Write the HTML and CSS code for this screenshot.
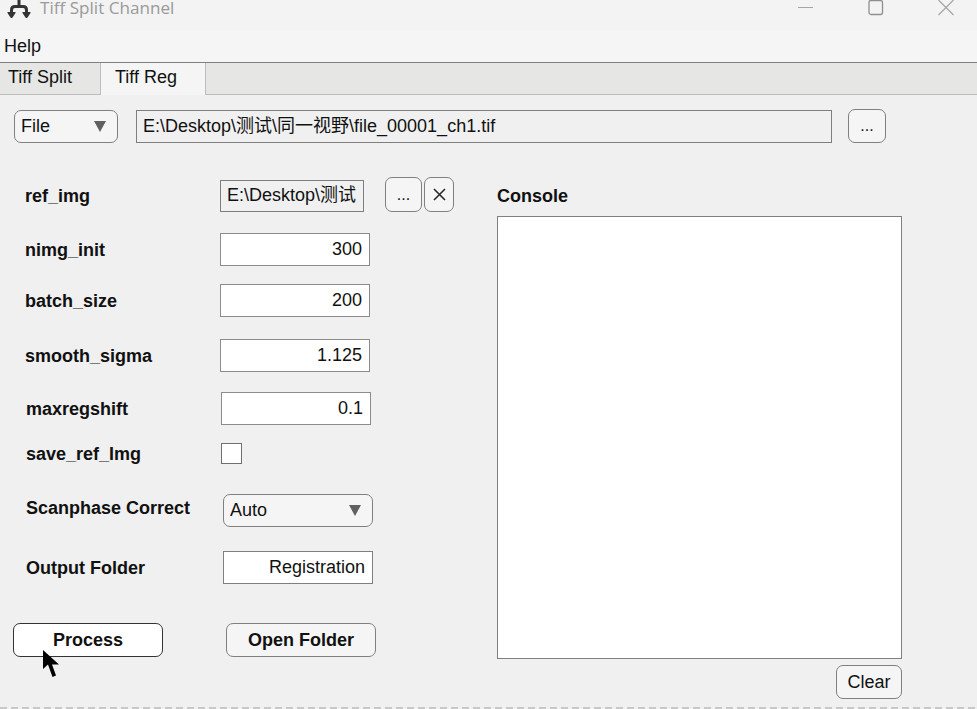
FILE: index.html
```html
<!DOCTYPE html>
<html lang="en">

<head>
   <meta charset="UTF-8">
   <meta name="viewport" content="width=device-width, initial-scale=1.0">
   <title>Tiff Split Channel</title>
   <link rel="stylesheet" href="styles.css">
</head>

<body>
   <header class="titlebar">
      <svg class="app-icon" width="26" height="20" viewBox="0 0 26 20">
         <path d="M13 0V6.500M5.500 14V10Q5.500 6.500 9 6.500H17Q20.500 6.500 20.500 10V14" fill="none" stroke="#333" stroke-width="3" />
         <path d="M2 12H9Q10 12 9.500 13L6.500 17.500Q5.500 18.500 4.500 17.500L1.500 13Q1 12 2 12ZM17 12H24Q25 12 24.500 13L21.500 17.500Q20.500 18.500 19.500 17.500L16.500 13Q16 12 17 12Z" fill="#333" />
      </svg>
      <span class="app-title">Tiff Split Channel</span>
      <div class="window-btns">
         <svg width="16" height="16" viewBox="0 0 16 16"><path d="M0 7.500H15" stroke="#a5a5a5" /></svg>
         <svg width="16" height="16" viewBox="0 0 16 16"><rect x="1" y="0.500" width="13.500" height="14" rx="2" fill="none" stroke="#8f8f8f" stroke-width="1.300" /></svg>
         <svg width="16" height="16" viewBox="0 0 16 16"><path d="M0.500 0L15.500 15M15.500 0L0.500 15" stroke="#a5a5a5" stroke-width="1.200" /></svg>
      </div>
   </header>

   <nav class="menubar">Help</nav>

   <div class="tabs">
      <div class="tab">Tiff Split</div>
      <div class="tab active">Tiff Reg</div>
   </div>

   <main class="panel">
      <div class="file-row">
         <div class="select file-select">File<span class="arrow"></span></div>
         <div class="field readonly file-path">E:\Desktop\测试\同一视野\file_00001_ch1.tif</div>
         <button class="btn browse-main" type="button">...</button>
      </div>

      <div class="columns">
         <section class="params">
            <div class="row row-ref">
               <label>ref_img</label>
               <div class="field readonly ref-path">E:\Desktop\测试</div>
               <button class="btn browse-ref" type="button">...</button>
               <button class="btn clear-ref" type="button">
                  <svg width="13" height="13" viewBox="0 0 13 13"><path d="M1 1L12 12M12 1L1 12" stroke="#222" stroke-width="1.500" /></svg>
               </button>
            </div>
            <div class="row row-nimg">
               <label>nimg_init</label>
               <div class="field num">300</div>
            </div>
            <div class="row row-batch">
               <label>batch_size</label>
               <div class="field num">200</div>
            </div>
            <div class="row row-smooth">
               <label>smooth_sigma</label>
               <div class="field num">1.125</div>
            </div>
            <div class="row row-shift">
               <label>maxregshift</label>
               <div class="field num">0.1</div>
            </div>
            <div class="row row-save">
               <label>save_ref_Img</label>
               <div class="checkbox"></div>
            </div>
            <div class="row row-scan">
               <label>Scanphase Correct</label>
               <div class="select scan-select">Auto<span class="arrow"></span></div>
            </div>
            <div class="row row-output">
               <label>Output Folder</label>
               <div class="field num">Registration</div>
            </div>
            <div class="actions">
               <button class="btn action primary" type="button">Process</button>
               <button class="btn action" type="button">Open Folder</button>
            </div>
         </section>

         <section class="console">
            <h2>Console</h2>
            <div class="console-box"></div>
            <button class="btn clear-console" type="button">Clear</button>
         </section>
      </div>
   </main>

   <svg class="cursor" width="18" height="30" viewBox="0 0 18 30">
      <path d="M1 1V20L6 15.500L10.500 28L14 26.500L10 15.500H17Z" fill="#000" />
   </svg>
</body>

</html>
```

FILE: styles.css
```css
html,
body {
   margin: 0;
   padding: 0;
   height: 709px;
   overflow: hidden;
}

body {
   position: relative;
   background-color: #f0f0f0;
   color: #111;
   font-family: 'Liberation Sans', 'Noto Sans CJK SC', sans-serif;
   font-size: 18px;
}

.titlebar {
   display: flex;
   align-items: flex-start;
   height: 30px;
   background-color: #f3f3f3;
   overflow: hidden;
}

.app-icon {
   margin: 0 0 0 6px;
}

.app-title {
   margin: -4px 0 0 8px;
   color: #9a9a9a;
   font-family: 'Open Sans', sans-serif;
   font-size: 17.100px;
   line-height: 24px;
}

.window-btns {
   display: flex;
   margin-left: auto;
   margin-right: 23px;
   gap: 54px;
}

.menubar {
   height: 32px;
   line-height: 32px;
   padding-left: 4px;
   background-color: #f5f5f5;
   border-bottom: 1px solid #808080;
}

.tabs {
   display: flex;
   height: 31px;
   background-color: #e6e6e4;
   border-bottom: 1px solid #bdbdbd;
}

.tab {
   box-sizing: border-box;
   width: 101px;
   padding-left: 8px;
   line-height: 28px;
   border-right: 1px solid #bdbdbd;
}

.tab.active {
   width: 105px;
   height: 32px;
   padding-left: 14px;
   background-color: #f5f5f5;
}

.panel {
   padding-top: 15px;
}

.file-row {
   display: flex;
   align-items: flex-end;
   height: 33px;
   padding-left: 14px;
}

.field {
   box-sizing: border-box;
   width: 150px;
   height: 33px;
   padding: 0 7px 0 6px;
   line-height: 30px;
   background-color: #fff;
   border: 1px solid #8c8c8c;
   white-space: nowrap;
   overflow: hidden;
}

.field.readonly {
   background-color: #f0f0f0;
   border-color: #7f7f7f;
}

.field.num {
   text-align: right;
}

.select {
   box-sizing: border-box;
   display: flex;
   align-items: center;
   justify-content: space-between;
   width: 150px;
   height: 33px;
   padding: 0 11px 0 6px;
   background-color: #f5f5f5;
   border: 1px solid #808080;
   border-radius: 7px;
}

.arrow {
   width: 0;
   height: 0;
   border-left: 6.500px solid transparent;
   border-right: 6.500px solid transparent;
   border-top: 11px solid #606060;
}

.file-select {
   width: 104px;
}

.file-path {
   width: 696px;
   margin-left: 18px;
}

.btn {
   box-sizing: border-box;
   height: 34px;
   padding: 0;
   background-color: #f5f5f5;
   border: 1px solid #808080;
   border-radius: 7px;
   color: #111;
   font: inherit;
}

.browse-main {
   width: 38px;
   margin-left: 16px;
   font-size: 16px;
}

.columns {
   display: flex;
   align-items: flex-start;
}

.params {
   width: 483px;
   flex: none;
}

.row {
   display: flex;
   align-items: center;
   padding-left: 25px;
}

.row label {
   width: 195px;
   flex: none;
   font-weight: bold;
   line-height: 20px;
   margin-top: 1px;
}

.row-ref {
   margin-top: 34px;
   height: 35px;
   align-items: flex-end;
}

.row-ref label {
   align-self: center;
   margin-top: 3px;
}

.ref-path {
   width: 144px;
   height: 32px;
   line-height: 29px;
}

.browse-ref {
   width: 37px;
   height: 35px;
   margin-left: 21px;
   font-size: 16px;
}

.clear-ref {
   display: flex;
   align-items: center;
   justify-content: center;
   width: 30px;
   height: 35px;
   margin-left: 2px;
}

.row-nimg {
   margin-top: 21px;
}

.row-batch {
   margin-top: 18px;
}

.row-smooth {
   margin-top: 22px;
}

.row-shift {
   margin-top: 20px;
   padding-left: 26px;
}

.row-save {
   margin-top: 18px;
   padding-left: 26px;
}

.checkbox {
   box-sizing: border-box;
   width: 21px;
   height: 21px;
   background-color: #fff;
   border: 1px solid #707070;
}

.row-scan {
   margin-top: 30px;
   padding-left: 26px;
}

.row-scan label,
.row-output label {
   width: 197px;
}

.row-scan label {
   margin-top: -5px;
}

.row-output {
   margin-top: 24px;
   padding-left: 26px;
}

.row-output .field {
   border-color: #808080;
}

.actions {
   display: flex;
   gap: 63px;
   margin-top: 39px;
   padding-left: 13px;
}

.action {
   width: 150px;
   font-weight: bold;
}

.action.primary {
   background-color: #fff;
   border-color: #333;
}

.console {
   display: flex;
   flex-direction: column;
   align-items: flex-end;
   width: 405px;
   margin-left: 14px;
}

.console h2 {
   align-self: flex-start;
   height: 20px;
   margin: 43px 0 10px;
   font-size: 18px;
   line-height: 20px;
}

.console-box {
   box-sizing: border-box;
   width: 405px;
   height: 443px;
   background-color: #fff;
   border: 1px solid #808080;
}

.clear-console {
   width: 66px;
   margin-top: 6px;
}

.cursor {
   position: absolute;
   left: 42px;
   top: 649px;
}

body::after {
   content: "";
   position: absolute;
   left: 0;
   right: 0;
   bottom: 0;
   height: 2px;
   background: repeating-linear-gradient(to right, #c8c8c8 0 7px, transparent 7px 11px);
}
```
